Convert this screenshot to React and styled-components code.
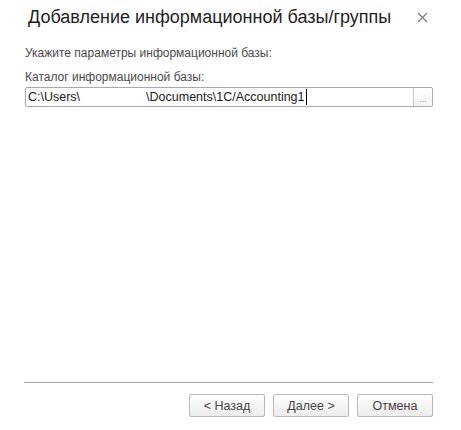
import React from "react";
import styled, { createGlobalStyle } from "styled-components";

const GlobalStyle = createGlobalStyle`
  html, body {
    margin: 0;
    padding: 0;
    background: #ffffff;
  }
  body {
    font-family: "Liberation Sans", Arial, sans-serif;
  }
`;

const Dialog = styled.div`
  width: 461px;
  height: 430px;
  box-sizing: border-box;
  display: flex;
  flex-direction: column;
  background: #ffffff;
`;

const TitleBar = styled.div`
  display: flex;
  align-items: center;
  justify-content: space-between;
  height: 34px;
  padding: 0 33px 0 28px;
`;

const Title = styled.h1`
  margin: 0;
  font-size: 18px;
  font-weight: normal;
  color: #1e1e1e;
  white-space: nowrap;
`;

const CloseButton = styled.button`
  width: 12px;
  height: 12px;
  padding: 0;
  border: none;
  background: none;
  display: flex;
  align-items: center;
  justify-content: center;
  cursor: pointer;
`;

const Content = styled.div`
  flex: 1;
  display: flex;
  flex-direction: column;
  padding: 12px 28px 0 25px;
`;

const Label = styled.div`
  font-size: 12px;
  color: #4a4a4a;
  line-height: 14px;
  margin-bottom: ${(p) => p.$gap}px;
`;

const Field = styled.div`
  display: flex;
  height: 20px;
  border: 1px solid #a9a9a9;
  border-radius: 2px;
  box-sizing: border-box;
  background: #fff;
`;

const FieldText = styled.div`
  flex: 1;
  display: flex;
  align-items: center;
  padding-left: 2px;
  font-size: 12.5px;
  color: #1a1a1a;
  white-space: nowrap;
  overflow: hidden;
`;

const Hidden = styled.span`
  display: inline-block;
  width: 66px;
`;

const Caret = styled.span`
  display: inline-block;
  width: 1px;
  height: 16px;
  background: #000;
  margin-left: 1px;
`;

const PickButton = styled.div`
  width: 19px;
  border-left: 1px solid #c6c6c6;
  background: linear-gradient(#ffffff, #f3f3f3);
  color: #888;
  font-size: 9px;
  display: flex;
  align-items: center;
  justify-content: center;
  padding-top: 3px;
  box-sizing: border-box;
  border-radius: 0 2px 2px 0;
`;

const Footer = styled.div`
  display: flex;
  flex-direction: column;
  padding: 0 28px 13px 24px;
`;

const Separator = styled.div`
  height: 1px;
  background: #a6a6a6;
  margin-bottom: 11px;
`;

const ButtonRow = styled.div`
  display: flex;
  justify-content: flex-end;
  gap: 8px;
`;

const Button = styled.button`
  width: 76px;
  height: 23px;
  box-sizing: border-box;
  border: 1px solid #b9b9b9;
  border-radius: 2px;
  background: linear-gradient(#ffffff, #ececec);
  font-family: "Liberation Sans", Arial, sans-serif;
  font-size: 12.5px;
  color: #444;
  padding: 0;
  cursor: pointer;
`;

export default function App() {
  return (
    <>
      <GlobalStyle />
      <Dialog>
        <TitleBar>
          <Title>Добавление информационной базы/группы</Title>
          <CloseButton aria-label="Закрыть">
            <svg width="11" height="11" viewBox="0 0 11 11">
              <path d="M1 1L10 10M10 1L1 10" stroke="#777" strokeWidth="1.1" />
            </svg>
          </CloseButton>
        </TitleBar>
        <Content>
          <Label $gap={10}>Укажите параметры информационной базы:</Label>
          <Label $gap={3}>Каталог информационной базы:</Label>
          <Field>
            <FieldText>
              C:\Users\<Hidden />\Documents\1C/Accounting1<Caret />
            </FieldText>
            <PickButton>...</PickButton>
          </Field>
        </Content>
        <Footer>
          <Separator />
          <ButtonRow>
            <Button>&lt; Назад</Button>
            <Button>Далее &gt;</Button>
            <Button>Отмена</Button>
          </ButtonRow>
        </Footer>
      </Dialog>
    </>
  );
}
